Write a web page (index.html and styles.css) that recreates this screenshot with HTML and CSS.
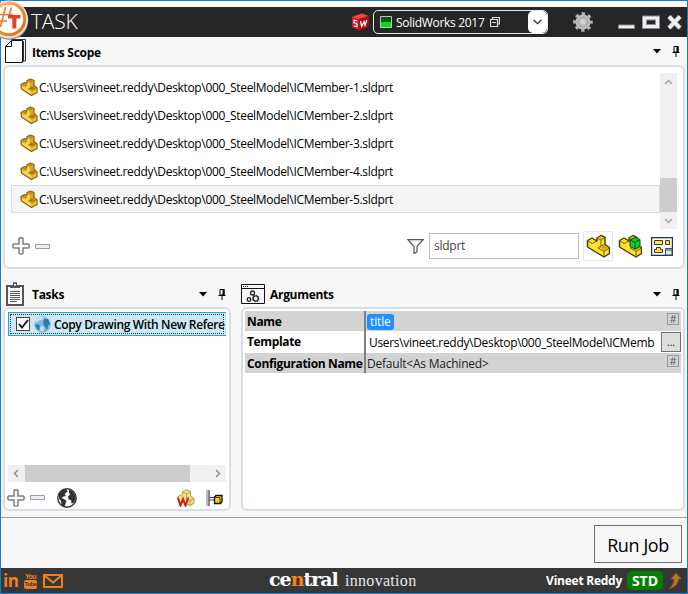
FILE: index.html
```html
<!DOCTYPE html>
<html lang="en">
<head>
<meta charset="utf-8">
<title>#TASK</title>
<link rel="stylesheet" href="styles.css">
</head>
<body>
<svg width="0" height="0" class="defs">
  <defs>
    <linearGradient id="ring" x1="0" y1="0" x2="1" y2="1"><stop offset="0" stop-color="#ffbf80"/><stop offset=".55" stop-color="#f28a2c"/><stop offset="1" stop-color="#e36a10"/></linearGradient>
    <radialGradient id="globe" cx=".35" cy=".3" r=".8"><stop offset="0" stop-color="#d4ecf8"/><stop offset=".6" stop-color="#7dbbe0"/><stop offset="1" stop-color="#3f83b8"/></radialGradient>
    <symbol id="part" viewBox="0 0 24 24">
      <path d="M1.500 6.500 6 4l5 3V4l4-2.500L19 3.500v7l4.500 3v6l-5.500 3.500-5-3L1.500 13z" fill="#ffe32b" stroke="#4a3503" stroke-width="1.400" stroke-linejoin="round"/>
      <path d="M1.500 6.500 6 9.500 11 7M11 4l4 2v6l-3 2 6 3.500 5.500-3.500M15 6l4-2.500M15 12l4-1.500M18 17.500V23" fill="none" stroke="#6b4e08" stroke-width=".9"/>
      <path d="M14 13.200 18.500 11l4 2.700-4.500 2.800z" fill="#d9a31a"/>
      <path d="M12 4 15 2.200 18 3.500 15 5.200z" fill="#e9bd25"/>
    </symbol>
    <symbol id="part-s" viewBox="0 0 18 18">
      <path d="M1 6.500 4.500 4.500 7 5.500V2.500L10.500 1 14 2.500V7.500L17 10v4.500L11.500 17.500 1.500 11z" fill="#dba51d" stroke="#86600f" stroke-width="1.200" stroke-linejoin="round"/>
      <path d="M7.200 2.800 10.500 1.500 13.500 2.800 10 4.500zM1.500 6.700 4.500 5 7 6.200 5 8z" fill="#bd8d25"/>
      <path d="M2 8 5 9.300 7.300 8V4l2.500 1.300V9.500L7.500 11l4 2.500v3L2.200 10.700z" fill="#fbd54a"/>
      <path d="M12.500 13.500 16.300 11.300V14L12.500 16.300z" fill="#f2c233"/>
      <path d="M8.500 10.500 12 8.500 16 10.500 12 12.800z" fill="#a87a1c"/>
    </symbol>
    <symbol id="plus" viewBox="0 0 18 18"><path d="M7 1.500Q9-.3 11 1.500V7h5.500q1.500 2 0 4H11v5.500q-2 1.500-4 0V11H1.500q-1.500-2 0-4H7z" fill="#f8f8f8" stroke="#808080" stroke-width="1.500"/></symbol>
    <symbol id="minus" viewBox="0 0 15 5"><path d="M.5.500h14v4H.5z" fill="#eeeef4" stroke="#9b9ba3"/></symbol>
    <symbol id="pin" viewBox="0 0 8 11"><path d="M2 .5h4V6H2zM.5 6.500h7M4 7v4" fill="none" stroke="#000"/><path d="M4.500 0H6.500v6.500h-2zM1 6h6v1H1z"/></symbol>
    <symbol id="caret" viewBox="0 0 8 5"><path d="M0 0h8L4 4.600z"/></symbol>
  </defs>
</svg>
<div class="window">
  <header class="titlebar">
    <svg class="logo" width="29" height="42" viewBox="0 0 29 42">
      <circle cx="9" cy="20.500" r="19.300" fill="#8f8f8f"/>
      <circle cx="9" cy="19.500" r="19" fill="#e4e4e4"/>
      <circle cx="9" cy="19" r="15.700" fill="#fff" stroke="url(#ring)" stroke-width="3"/>
      <path d="M5.500 7 .5 27M11.500 7.500 9 16M0 14.500h13M0 21h7" stroke="#f07c30" stroke-width="1.700" fill="none"/>
      <path d="M8 15h12.500V18.500h-4.200v10h-4v-10H8z" fill="#e0422b"/>
    </svg>
    <h1 class="brand">TASK</h1>
    <svg class="sw" width="18" height="18" viewBox="0 0 18 18"><path d="M1 4 11 .5 17.500 3v10L8 17.500 1 14z" fill="#d7121d"/><path d="M1 4 8 6 17.500 3 11 .5z" fill="#f24a42"/><path d="M8 6v11.500l9.500-4.500V3z" fill="#b20b15"/><path d="M6 7.800 3 7.200v2.700l3 .8v3L2.700 13M9.500 8l1.200 5.500L13 8.500l1 3.800 1.800-5.300" fill="none" stroke="#fff" stroke-width="1.200"/></svg>
    <div class="combo">
      <svg width="12" height="12" viewBox="0 0 12 12"><path d="M.5.500h11v11H.5z" fill="#00e010" stroke="#b9c8b9"/><path d="M1 1h10v5H1z" fill="#064a0a"/><path d="M3 1v5M5.500 1v5M8 1v5" stroke="#0a7a14" stroke-width=".7"/></svg>
      <span>SolidWorks 2017</span>
      <svg width="10" height="10" viewBox="0 0 10 10"><path d="M2.500 2V.5h7v6.500H8M.5 2.500h7v7h-7zM2 5.500h4" fill="none" stroke="#ddd" stroke-width="1.200"/></svg>
      <button class="drop"><svg width="9" height="6" viewBox="0 0 9 6"><path d="M.5.700 4.500 4.700 8.500.7" fill="none" stroke="#333" stroke-width="1.300"/></svg></button>
    </div>
    <svg class="gear" width="20" height="20" viewBox="0 0 20 20"><circle cx="10" cy="10" r="8.300" fill="none" stroke="#b4b4b4" stroke-width="3" stroke-dasharray="3.300 3.219" stroke-dashoffset="1.600"/><circle cx="10" cy="10" r="7.600" fill="#bcbcbc"/><circle cx="10" cy="10" r="4.800" fill="none" stroke="#a2a2a2"/><circle cx="10" cy="10" r="2.500" fill="#d2d2d2"/></svg>
    <svg class="winbtns" width="64" height="15" viewBox="0 0 64 15"><path d="M.5 10h16v3.500H.5z" fill="#f2f2f5" stroke="#888894"/><path d="M26.500 3h13v8.500h-13z" fill="none" stroke="#888894" stroke-width="5"/><path d="M26.500 3h13v8.500h-13z" fill="none" stroke="#efeff3" stroke-width="3.200"/><path d="M51 1.500 62 13M62 1.500 51 13" stroke="#888894" stroke-width="5"/><path d="M51 1.500 62 13M62 1.500 51 13" stroke="#f0f0f4" stroke-width="3.400"/></svg>
  </header>

  <section class="scope">
    <div class="head">
      <svg class="hicon" width="21" height="25" viewBox="0 0 21 25"><path d="M6 .5h14.500V22H18M18 2.500h.5V22" fill="none" stroke="#333"/><path d="M6.500 1.500h11v22H.500V7.500z" fill="#fff" stroke="#111"/><path d="M6.500 1.500v6h-6" fill="none" stroke="#111"/></svg>
      <h2>Items Scope</h2>
      <svg class="caret" width="8" height="5"><use href="#caret"/></svg>
      <svg width="8" height="11"><use href="#pin"/></svg>
    </div>
    <div class="panel">
      <div class="listwrap">
        <ul class="files">
          <li><svg width="18" height="18"><use href="#part-s"/></svg><span>C:\Users\vineet.reddy\Desktop\000_SteelModel\ICMember-1.sldprt</span></li>
          <li><svg width="18" height="18"><use href="#part-s"/></svg><span>C:\Users\vineet.reddy\Desktop\000_SteelModel\ICMember-2.sldprt</span></li>
          <li><svg width="18" height="18"><use href="#part-s"/></svg><span>C:\Users\vineet.reddy\Desktop\000_SteelModel\ICMember-3.sldprt</span></li>
          <li><svg width="18" height="18"><use href="#part-s"/></svg><span>C:\Users\vineet.reddy\Desktop\000_SteelModel\ICMember-4.sldprt</span></li>
          <li class="on"><svg width="18" height="18"><use href="#part-s"/></svg><span>C:\Users\vineet.reddy\Desktop\000_SteelModel\ICMember-5.sldprt</span></li>
        </ul>
        <div class="vscroll">
          <svg width="17" height="17" viewBox="0 0 17 17"><path d="M5 11 8.500 7.500 12 11" fill="none" stroke="#a0a0a0" stroke-width="1.400"/></svg>
          <div class="vthumb"></div>
          <svg width="17" height="17" viewBox="0 0 17 17"><path d="M5 7 8.500 10.500 12 7" fill="none" stroke="#a0a0a0" stroke-width="1.400"/></svg>
        </div>
      </div>
      <div class="tools">
        <svg width="18" height="18"><use href="#plus"/></svg>
        <svg width="15" height="5"><use href="#minus"/></svg>
        <svg class="filter" width="17" height="15" viewBox="0 0 17 15"><path d="M1 .7h15L10 7.500v5.500l-3 1.500v-7z" fill="#fff" stroke="#555" stroke-width="1.200"/></svg>
        <div class="input">sldprt</div>
        <div class="tool on"><svg width="24" height="24"><use href="#part"/></svg></div>
        <div class="tool"><svg width="24" height="24" viewBox="0 0 24 24"><use href="#part" width="24" height="24"/><path d="M12 6l5-2.500 5 2v7L17 15l-5-2.500z" fill="#0bd02b" stroke="#07501a"/><path d="M12 6l5 2.500V15M17 8.500l5-3" fill="none" stroke="#07501a"/></svg></div>
        <svg class="blocks" width="22" height="19" viewBox="0 0 22 19"><path d="M.5.500h21v18H.5z" fill="#f5f8fc" stroke="#1c3350" stroke-width="1.400"/><path d="M3.500 3.500h8v4h-8zM14.500 3.500h4v4h-4zM3.500 15.500v-3h2v-2h4v2h2v3z" fill="#ffdf4a" stroke="#49380c"/><path d="M14.500 11.500H21V18h-6.500z" fill="#dce8f5" stroke="#34506e"/><path d="M14.500 13h7" stroke="#34506e"/></svg>
      </div>
    </div>
  </section>

  <div class="lower">
    <section class="tasks">
      <div class="head">
        <svg class="hicon" width="18" height="24" viewBox="0 0 18 24"><path d="M1 4h16V23H1z" fill="#fff" stroke="#555" stroke-width="2"/><path d="M4 6h10V3h-3V.3H7V3H4z" fill="#555"/><path d="M8 2h2v1.500H8z" fill="#fff"/><path d="M4 9.500h10M4 11.500h10M4 13.500h10M4 15.500h10M4 17.500h10M4 19.500h7" stroke="#555"/></svg>
        <h2>Tasks</h2>
        <svg class="caret" width="8" height="5"><use href="#caret"/></svg>
        <svg width="8" height="11"><use href="#pin"/></svg>
      </div>
      <div class="panel">
        <div class="task">
          <span class="check"><svg width="11" height="10" viewBox="0 0 11 10"><path d="M1 5 4 8.500 10 1" fill="none" stroke="#111" stroke-width="1.900"/></svg></span>
          <svg width="17" height="17" viewBox="0 0 17 17"><circle cx="8.500" cy="8.500" r="8.200" fill="#7fbadd"/><path d="M1 5Q3 1 8 .8L10 2 8 4 5 4.500 3 7zM7 10l3 1-1 5-3-2z" fill="#c9e5f4"/><path d="M1 9l3-1 2 2-1 4-2-1zM10 3h4l2.500 5-2 1-1.500 5-2.500-4L9 7z" fill="#2f7cb4"/></svg>
          <span>Copy Drawing With New Refere</span>
        </div>
        <div class="hscroll">
          <svg width="17" height="17" viewBox="0 0 17 17"><path d="M10 5 6.500 8.500 10 12" fill="none" stroke="#888" stroke-width="1.400"/></svg>
          <div class="hthumb"></div>
          <svg width="17" height="17" viewBox="0 0 17 17"><path d="M7 5 10.500 8.500 7 12" fill="none" stroke="#888" stroke-width="1.400"/></svg>
        </div>
        <div class="tools">
          <svg width="18" height="18"><use href="#plus"/></svg>
          <svg width="15" height="5"><use href="#minus"/></svg>
          <svg class="earth" width="20" height="20" viewBox="0 0 20 20"><circle cx="10" cy="10" r="9.200" fill="#fff" stroke="#333" stroke-width="1.400"/><path d="M2 5 5 2 9 1 10.500 3 9 5 7.500 6 9 8 6.500 8.500 4.500 10 7 11 9.500 13 8.500 15.500 7.500 19 4.500 17 4 13 2 10.500zM12 1.500 16 3.500 18.500 8V12L16.500 15 14.500 15.500 14 12 11.500 11.500 11 8.500 13 6.500 12 4.500z" fill="#333"/></svg>
          <svg class="asm" width="18" height="18" viewBox="0 0 18 18"><path d="M5.500 3 9 .7l4.500 1.500v5l3.500 2v5L13 16.500 1.500 12V7L5.500 5.500z" fill="#f1df86" stroke="#bf9f46"/><path d="M5.500 3l4 2 4-2.500M9.500 5v5M9 10l4 2 4-2.500M13 12v4.500" fill="none" stroke="#bf9f46"/><path d="M.8 8.500 3.500 16.500 6 10 8.500 16.500 11.500 8.500" fill="none" stroke="#cf2020" stroke-width="2"/></svg>
          <svg width="17" height="18" viewBox="0 0 17 18"><path d="M1 1v16" stroke="#777"/><path d="M3 1v16" stroke="#111"/><path d="M3 8.500h6M3 11h6" stroke="#444"/><path d="M8.500 8 10 6.500h6v6L14.500 14.500H8.500z" fill="#ffcf20" stroke="#111" stroke-width="1.300"/><path d="M8.500 8.500H14v6" fill="none" stroke="#111" stroke-width=".8"/></svg>
        </div>
      </div>
    </section>

    <section class="args">
      <div class="head">
        <svg class="hicon" width="24" height="20" viewBox="0 0 24 20"><path d="M.5.500h23v19H.5zM.5 4.500h23" fill="none" stroke="#111"/><path d="M2 2.500h1M4 2.500h1M6 2.500h1" stroke="#111"/><g fill="none" stroke="#222" stroke-width="1.300"><circle cx="11.500" cy="9" r="2"/><circle cx="8" cy="15.500" r="1.800"/><circle cx="14.700" cy="14.500" r="2.600"/></g><circle cx="14.700" cy="14.500" r="3.300" fill="none" stroke="#222" stroke-dasharray="1 1.600"/></svg>
        <h2>Arguments</h2>
        <svg class="caret" width="8" height="5"><use href="#caret"/></svg>
        <svg width="8" height="11"><use href="#pin"/></svg>
      </div>
      <div class="panel">
        <div class="arg gray"><b>Name</b><div class="val"><mark>title</mark></div><i class="hash">#</i></div>
        <div class="arg mid"><b>Template</b><div class="val path"><span>Users\vineet.reddy\Desktop\000_SteelModel\ICMemb</span></div><button class="more">...</button></div>
        <div class="arg gray"><b>Configuration Name</b><div class="val cfg"><span>Default&lt;As Machined&gt;</span></div><i class="hash">#</i></div>
      </div>
    </section>
  </div>

  <div class="actions"><button class="run">Run Job</button></div>

  <footer>
    <span class="in">in</span>
    <span class="yt"><small>You</small><em>Tube</em></span>
    <svg width="20" height="14" viewBox="0 0 20 14"><path d="M1 1h18v12H1zM1.500 1.500 10 8.500 18.500 1.500" fill="none" stroke="#f0801f" stroke-width="2"/></svg>
    <div class="company"><b>ce<em>n</em>tral</b><span>innovation</span></div>
    <span class="user">Vineet Reddy</span>
    <span class="std">STD</span>
    <svg class="up" width="14" height="18" viewBox="0 0 14 18"><path d="M8 1 13.500 7H10.500Q10.500 14 1 17 6.500 12 6 7H3z" fill="#b8742c" stroke="#8a5520" stroke-width=".7"/></svg>
  </footer>
</div>
</body>
</html>
```
FILE: styles.css
```css
* { box-sizing: border-box; }
body { margin: 0; font: 12px/16px "Open Sans", "Noto Sans", sans-serif; color: #000; }
svg { display: block; flex: none; }
.defs { position: absolute; }
h1, h2, ul { margin: 0; padding: 0; }
button { font-family: inherit; padding: 0; margin: 0; color: #000; }
.window { width: 688px; height: 594px; border: 1px solid #1a7bcb; background: #f7f7f7; display: flex; flex-direction: column; position: relative; }
.titlebar { height: 36px; flex: none; border-top: 6px solid #fcfcfc; background: #262626; display: flex; align-items: center; padding: 0 5px 0 30px; }
.logo { position: absolute; left: -1px; top: -1px; }
.brand { font: 300 21px/26px "Open Sans", sans-serif; color: #fff; letter-spacing: -.2px; width: 320px; padding-bottom: 3px; }
.combo { width: 175px; height: 24px; margin-left: 4px; border: 1px solid #e8e8e8; border-radius: 5px; display: flex; align-items: center; padding-left: 6px; color: #fff; }
.combo span { margin: 1px 5px 0 4px; letter-spacing: -.3px; white-space: nowrap; }
.drop { width: 19px; height: 22px; margin-left: auto; background: #fff; border: 0; border-radius: 5px; display: flex; align-items: center; justify-content: center; }
.gear { margin-left: 25px; }
.winbtns { margin-left: 25px; }

.head { display: flex; align-items: center; }
.head h2 { font-size: 12px; line-height: 16px; font-weight: 700; letter-spacing: -.3px; padding-top: 2px; }
.caret { margin-left: auto; margin-right: 14px; }
.panel { background: #fff; border: 2px solid #d5dde5; border-radius: 6px; display: flex; flex-direction: column; }
.scope { padding: 0 2px; }
.scope .head { height: 28px; padding: 1px 5px 0 2px; }
.scope .caret { margin-right: 11px; }
.scope .hicon { margin-right: 6px; }
.scope .panel { height: 204px; padding: 6px 6px 0; }
.listwrap { display: flex; height: 156px; }
.files { list-style: none; flex: 1; }
.files li { height: 28px; display: flex; align-items: center; padding-left: 8px; border: 1px solid transparent; letter-spacing: -.32px; white-space: nowrap; }
.files li span { margin-left: 1px; padding-top: 1px; }
.files li.on { background: #f5f5f5; border-color: #dadada; }
.vscroll { width: 17px; background: #f0f0f0; display: flex; flex-direction: column; }
.vthumb { height: 34px; margin-top: auto; background: #cdcdcd; }
.tools { display: flex; align-items: center; }
.scope .tools { height: 34px; padding-right: 4px; padding-left: 1px; }
.tools svg + svg { margin-left: 5px; }
.tools .filter { margin-left: auto !important; margin-right: 5px; }
.input { width: 150px; height: 26px; border: 1px solid #bdbdbd; padding-left: 4px; line-height: 23px; color: #444; letter-spacing: -.25px; margin-right: 4px; }
.tool { width: 30px; height: 30px; display: flex; align-items: center; justify-content: center; margin-right: 2px; }
.tool.on { border: 1px solid #e8e8e8; }
.blocks { margin-left: 4px; }

.lower { display: flex; gap: 10px; padding: 12px 2px 0; height: 242px; flex: none; }
.lower .head { height: 26px; padding-right: 5px; }
.lower .caret { margin-right: 11px; }
.lower .panel { height: 204px; padding: 3px; }
.tasks { width: 228px; }
.tasks .head { padding-left: 3px; }
.tasks .hicon { margin-right: 8px; }
.args { width: 444px; }
.args .hicon { margin-right: 5px; }
.task { height: 24px; flex: none; background: #cbe8f6; border: 1px solid #26a0da; border-right: 0; outline: 1px dotted #333; outline-offset: -3px; display: flex; align-items: center; gap: 4px; padding-left: 7px; white-space: nowrap; font-weight: 600; letter-spacing: -.36px; }
.task > span:last-child { flex: none; margin-left: -1px; padding-top: 2px; }
.check { width: 14px; height: 14px; background: #fff; border: 1px solid #444; display: flex; align-items: center; justify-content: center; flex: none; }
.hscroll { margin-top: 129px; height: 17px; flex: none; background: #f0f0f0; display: flex; justify-content: space-between; }
.hthumb { width: 165px; background: #cdcdcd; margin-right: auto; }
.tasks .panel .tools { height: 29px; flex: none; margin: 1px 0 0 -1px; padding-right: 3px; }
.tasks .panel { padding-top: 3px; padding-bottom: 0; }
.tasks .hscroll { margin-top: 129px; }
.tasks .earth { margin-left: 12px !important; }
.tasks .asm { margin-left: auto !important; }
.tasks .asm + svg { margin-left: 11px; }
.args .panel { padding: 2px; }
.arg { height: 20px; display: flex; align-items: stretch; }
.arg.gray { background: #d3d3d3; }
.arg.mid { height: 22px; }
.arg b { width: 121px; flex: none; padding-left: 2px; border-right: 2px solid #808080; line-height: 22px; white-space: nowrap; letter-spacing: -.35px; }
.val { flex: 1; min-width: 0; display: flex; align-items: center; white-space: nowrap; letter-spacing: -.32px; padding: 1px 0 0 1px; color: #222; }
.cfg { letter-spacing: -.22px; padding-top: 2px; }
.val mark { background: #1e90ff; color: #fff; border-radius: 3px; padding: 0 3px; height: 16px; letter-spacing: -.15px; }
.path { padding: 2px 0 0 3px; margin-right: 8px; color: #000; }
.hash { width: 12px; height: 12px; margin: 2px 2px 0 0; border: 1px solid #999; color: #666; font-size: 11px; line-height: 10px; text-align: center; font-style: normal; }
.more { width: 20px; height: 20px; margin-top: 1px; border: 1px solid #707070; background: #ddd; font-size: 10px; line-height: 16px; }

.actions { height: 51px; flex: none; border-top: 1px solid #a0a0a0; margin-top: 6px; padding: 7px 5px 0 0; display: flex; justify-content: flex-end; }
.run { width: 88px; height: 38px; border: 1px solid #707070; background: #f7f7f7; font-size: 18px; letter-spacing: -.4px; padding-top: 1px; }
footer { flex: 1; min-height: 0; background: #373738; display: flex; align-items: center; padding: 0 5px 0 2px; color: #fff; }
.in { color: #f0801f; font: 700 17px/22px "Open Sans", sans-serif; letter-spacing: -.5px; width: 21px; }
.yt { width: 13px; margin-right: 6px; color: #f0801f; display: flex; flex-direction: column; align-items: center; font-family: "Liberation Sans", sans-serif; }
.yt small { font-size: 7px; line-height: 7px; letter-spacing: -.5px; font-weight: bold; }
.yt em { background: #f0801f; color: #373738; border-radius: 2px; width: 13px; height: 9px; font: bold 6px/9px "Liberation Sans", sans-serif; letter-spacing: -.4px; text-align: center; }
.company { margin-left: 206px; display: flex; align-items: baseline; font-family: "DejaVu Serif", serif; line-height: 20px; padding-bottom: 2px; }
.company b { font-size: 19px; letter-spacing: -1px; width: 76px; }
.company em { color: #f58220; font-style: normal; }
.company span { font: 300 16px/20px "Liberation Serif", serif; letter-spacing: .3px; color: #e8e8e8; }
.user { margin-left: auto; font-weight: 700; letter-spacing: -.25px; }
.std { margin: 0 5px; width: 36px; height: 19px; border-radius: 5px; background: #008000; font: 700 14px/19px "Open Sans", sans-serif; text-align: center; }
```
